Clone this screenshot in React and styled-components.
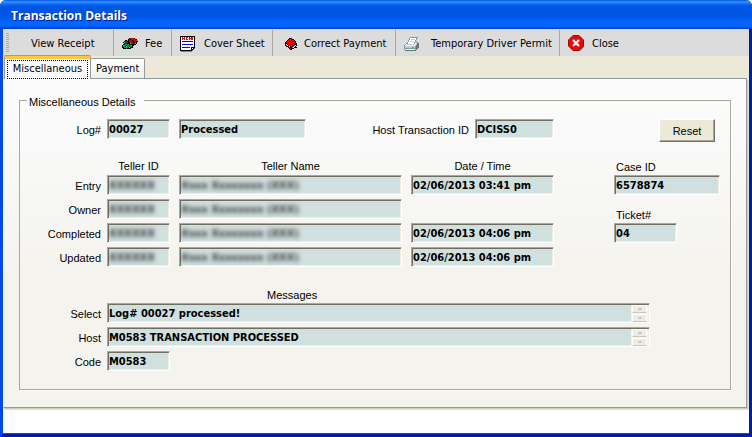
import React from "react";
import styled, { createGlobalStyle, css } from "styled-components";

const UI_FONT = '"DejaVu Sans Condensed", "DejaVu Sans", sans-serif';
const LABEL_FONT = '"Liberation Sans", Arial, sans-serif';

const GlobalStyle = createGlobalStyle`
  *, *::before, *::after { box-sizing: border-box; }
  body { margin: 0; background: #fff; }
  button, input, textarea { font: inherit; color: inherit; margin: 0; }
`;

const Window = styled.main`
  display: flex;
  flex-direction: column;
  min-height: 100vh;
  border: solid #0831d9;
  border-width: 0 3px 3px;
  border-color: #0831d9 #001ea0 #001ea0 #0048f0;
  border-radius: 6px 6px 0 0;
  background: #fff;
  color: #000;
  font: 11px/14px ${LABEL_FONT};
  box-shadow: inset 0 -1px #0050ee;
`;

const TitleBar = styled.header`
  display: flex;
  align-items: center;
  height: 29px;
  margin: 0 -3px;
  padding: 3px 11px 0;
  border-radius: 6px 6px 0 0;
  background: linear-gradient(
    #0058e6 0, #3a93ff 2px, #0a6af4 4px, #0055e5 7px, #0053e1 15px,
    #0066ff 22px, #0066ff 26px, #0144d0 28px, #003dd7 29px
  );
`;

const Title = styled.h1`
  margin: 0;
  color: #fff;
  font: bold 12px/20px "Open Sans", sans-serif;
  text-shadow: 1px 1px #0a1883;
`;

const Toolbar = styled.nav`
  display: flex;
  height: 27px;
  background: #dcdcdc;
  font-family: ${UI_FONT};
`;

const Grip = styled.span`
  width: 3px;
  margin: 4px 0 4px 3px;
  background: repeating-linear-gradient(#aaa 0 1px, #dcdcdc 1px 2px);
`;

const ToolButton = styled.button`
  display: flex;
  align-items: center;
  gap: ${({ $gap }) => $gap || 7}px;
  width: ${({ $width }) => $width}px;
  margin-top: 1px;
  padding: 1px 0 0 ${({ $inset }) => $inset || 8}px;
  border: 0;
  border-right: ${({ $last }) => ($last ? "0" : "1px solid #aca899")};
  background: none;
  white-space: nowrap;
`;

const TabStrip = styled.div`
  display: flex;
  align-items: flex-end;
  height: 22px;
  padding-left: 1px;
  background: #ece9d8;
  font-family: ${UI_FONT};
`;

const Tab = styled.button`
  padding: 1px 5px 0;
  border: 1px solid #919b9c;
  border-bottom: 0;
  border-radius: 2px 2px 0 0;
  ${({ $active }) =>
    $active
      ? css`
          height: 23px;
          width: 87px;
          margin-bottom: -1px;
          padding: 0 2px;
          border-top: 3px solid #ffc73c;
          box-shadow: 0 -1px #e68b2c;
          background: #fcfcfe;
          z-index: 1;
        `
      : css`
          height: 20px;
          width: 54px;
          border-left: 0;
          background: linear-gradient(#fff, #f0f0ea);
        `}
`;

const FocusRing = styled.span`
  display: block;
  height: 19px;
  line-height: 16px;
  border: 1px dotted #000;
`;

const Page = styled.section`
  padding: 12px 9px 17px 15px;
  margin-right: 2px;
  border: 1px solid #919b9c;
  border-left-color: #fff;
  box-shadow: 1px 1px #d0cebf, 2px 2px #e3e0d0;
  background: linear-gradient(#fcfcfe, #f4f3ee 60%);
`;

const Group = styled.fieldset`
  min-width: 0;
  margin: 0 6px 0 0;
  padding: 10px 10px 18px 0;
  border: 1px solid #aca899;
  box-shadow: 1px 1px #fff;
`;

const Legend = styled.legend`
  margin-left: 7px;
  padding: 4px 9px 0 2px;
  line-height: 14px;
`;

const Columns = styled.div`
  display: flex;
`;

const Main = styled.div`
  flex: none;
`;

const Side = styled.div`
  flex: 1;
  display: flex;
  flex-direction: column;
  align-items: flex-start;
  padding-left: 60px;
`;

const Line = styled.div`
  display: grid;
  grid-template-columns: 78px 63px 127px 151px 79px;
  column-gap: 9px;
  align-items: center;
  margin-bottom: 22px;
`;

const Entries = styled.div`
  display: grid;
  grid-template-columns: 78px 63px 223px 143px;
  gap: 4px 9px;
  align-items: center;
`;

const Messages = styled.div`
  display: grid;
  grid-template-columns: 78px 543px;
  gap: 4px 9px;
  align-items: center;
  margin-top: 24px;
`;

const Heading = styled.span`
  grid-column: ${({ $column }) => $column || "auto"};
  line-height: 10px;
  text-align: center;
`;

const MessagesHeading = styled.span`
  grid-column: 2;
  padding-left: 160px;
  line-height: 8px;
`;

const RowLabel = styled.label`
  margin-right: -3px;
  padding-top: 2px;
  text-align: right;
`;

const SideLabel = styled.label`
  margin: ${({ $gap }) => $gap}px 0 1px 2px;
`;

const Frame = styled.span`
  display: flex;
  height: 20px;
  width: ${({ $width }) => ($width ? `${$width}px` : "auto")};
  overflow: hidden;
  border: 1px solid;
  border-color: #aca899 #fff #fff #aca899;
  background: #d0e0df;
  box-shadow: inset 1px 1px #716f64, inset -1px -1px #f1efe2;
`;

const Input = styled.input`
  flex: 1;
  min-width: 0;
  padding: 1px 1px 0;
  border: 0;
  outline: 0;
  background: none;
  font: bold 11px/16px ${UI_FONT};
  ${({ $masked }) => $masked && "filter: blur(2px); color: #333;"}
`;

const Spinner = styled.span`
  display: flex;
  flex-direction: column;
  gap: 1px;
  width: 17px;
  margin: 1px 1px 0 0;
  padding: 0 1px;
  background: #f4f3ee;
`;

const SpinButton = styled.button`
  display: flex;
  align-items: center;
  justify-content: center;
  height: 8px;
  padding: 0;
  border: 1px solid #fff;
  border-bottom-color: #c9c7ba;
  border-radius: 1px;
  background: #ecebe5;
`;

const ResetButton = styled.button`
  align-self: flex-end;
  width: 56px;
  height: 23px;
  margin-right: 5px;
  padding: 0;
  border: 1px solid;
  border-color: #fff #716f64 #716f64 #fff;
  background: #ece9d8;
  box-shadow: inset -1px -1px #aca899;
`;

const PALETTE = {
  K: "#000", R: "#f00000", D: "#9a1818", G: "#0a9a3c", N: "#065f2c", W: "#fff",
  C: "#18c8d8", B: "#0000ff", S: "#848484", L: "#c0ccd2", M: "#8899a2", E: "#eef3f6",
  V: "#18e018", P: "#66747f",
};

const Sprite = ({ rows }) => (
  <svg width={rows[0].length} height={rows.length} shapeRendering="crispEdges" aria-hidden="true">
    {rows.flatMap((row, y) =>
      [...row].map((c, x) =>
        c === "." ? null : <rect key={`${x}-${y}`} x={x} y={y} width="1" height="1" fill={PALETTE[c]} />
      )
    )}
  </svg>
);

const CARS = [
  ".......KDDDDDC..",
  "......KDKDDDDDK.",
  "...KKCKDDDKDDDRC",
  "..KDDKKDDDRKDDKK",
  ".KCDDRKKDDDKKRK.",
  "..KNNKKKCDDKDCK.",
  ".KNGGNGKKKKKKK..",
  "KCGGKGGNGCKK....",
  "KGGKCGGKGGK.....",
  "KKGGGGKCKKK.....",
  ".KKKNKKKK.......",
];

const MEMO = [
  "KKKKKKKKKKKKKKK.",
  "KWRWRWRRWRWRRWK.",
  "KWRRRWRWWRRRRWK.",
  "KWRWRWRRWRWRRWK.",
  "KWWWWWWWWWWWWWK.",
  "KWBBBBBBBBBBBWK.",
  "KWWWWWWWWWWWWWK.",
  "KWWWWWWWWWWWWWK.",
  "KWBBBBBBBBBBBWK.",
  "KWWWWWWWWWWWWWK.",
  "KWWWWWWWWWWWWWK.",
  "KWBBBBBBBBWKKKK.",
  "KWWWWWWWWWWKWKS.",
  "KWWWWWWWWWWKKS..",
  "KKKKKKKKKKKKS...",
  ".SSSSSSSSSSS....",
];

const BOOK = [
  "....KKK.....",
  "...KRRRKK...",
  "..KRRRRRRK..",
  ".KRRRRRRRRK.",
  "KRRRRRRRRRK.",
  "KKRRRRRRRRRK",
  "KWKRRRRRRKKK",
  "KDWKRRRRKSWK",
  ".KKDWKRKSWK.",
  "...KDKKSWKKK",
  "....KDKKK...",
  ".....KK.....",
];

const PRINTER = [
  "......MMMMMMMM.",
  ".....MWWWWWWM..",
  ".....MWLLLLWM..",
  "....MWWWWWWM...",
  "....MWLLLLWMM..",
  "...MWWWWWWMLLM.",
  "..MMWWWWWWMELPP",
  ".MELLLLLLLEELPP",
  "MEEEEEEEEEELPPP",
  "MLLLLLLLLLLMPPP",
  "MLLLLLLLVVLMPPP",
  "MMMMMMMMVVMMPP.",
  "MEEEEEEEEEEMP..",
  ".PPPPPPPPPPP...",
];

const CloseIcon = () => (
  <svg width="17" height="17" viewBox="0 0 17 17" aria-hidden="true">
    <path d="M6 2h6l4 4v6l-4 4H6l-4-4V6z" fill="#85807c" />
    <path d="M5 .5h6L15.500 5v6L11 15.500H5L.5 11V5z" fill="#f00808" stroke="#8c1010" />
    <path d="M5 5l6 6M11 5l-6 6" stroke="#fff" strokeWidth="2.200" />
  </svg>
);

const Arrow = ({ up }) => (
  <svg width="4" height="2" shapeRendering="crispEdges" aria-hidden="true">
    <path d={up ? "M1 0h2v1h1v1H0V1h1z" : "M0 0h4v1H3v1H1V1H0z"} fill="#c5c3b8" />
  </svg>
);

const Field = ({ value, width, label, id, masked, spin }) => (
  <Frame $width={width}>
    <Input id={id} aria-label={label} defaultValue={value} $masked={masked} readOnly />
    {spin && (
      <Spinner>
        <SpinButton aria-label="Scroll up" disabled><Arrow up /></SpinButton>
        <SpinButton aria-label="Scroll down" disabled><Arrow /></SpinButton>
      </Spinner>
    )}
  </Frame>
);

const ENTRIES = [
  { name: "Entry", time: "02/06/2013 03:41 pm" },
  { name: "Owner" },
  { name: "Completed", time: "02/06/2013 04:06 pm" },
  { name: "Updated", time: "02/06/2013 04:06 pm" },
];

export default function App() {
  return (
    <Window>
      <GlobalStyle />
      <TitleBar><Title>Transaction Details</Title></TitleBar>
      <Toolbar>
        <Grip />
        <ToolButton $width={105} $inset={22}>View Receipt</ToolButton>
        <ToolButton $width={58}><Sprite rows={CARS} />Fee</ToolButton>
        <ToolButton $width={101} $gap={8}><Sprite rows={MEMO} />Cover Sheet</ToolButton>
        <ToolButton $width={123} $inset={12}><Sprite rows={BOOK} />Correct Payment</ToolButton>
        <ToolButton $width={164} $gap={12}><Sprite rows={PRINTER} />Temporary Driver Permit</ToolButton>
        <ToolButton $width={80} $last><CloseIcon />Close</ToolButton>
      </Toolbar>
      <TabStrip role="tablist">
        <Tab role="tab" aria-selected="true" $active><FocusRing>Miscellaneous</FocusRing></Tab>
        <Tab role="tab" aria-selected="false">Payment</Tab>
      </TabStrip>
      <Page role="tabpanel">
        <Group>
          <Legend>Miscellaneous Details</Legend>
          <Columns>
            <Main>
              <Line>
                <RowLabel htmlFor="log">Log#</RowLabel>
                <Field id="log" value="00027" />
                <Field label="Status" value="Processed" />
                <RowLabel htmlFor="host-id">Host Transaction ID</RowLabel>
                <Field id="host-id" value="DCISS0" />
              </Line>
              <Entries>
                <Heading $column={2}>Teller ID</Heading>
                <Heading>Teller Name</Heading>
                <Heading>Date / Time</Heading>
                {ENTRIES.map(({ name, time }) => (
                  <React.Fragment key={name}>
                    <RowLabel htmlFor={name}>{name}</RowLabel>
                    <Field id={name} value="XXXXXX" masked />
                    <Field label={`${name} teller name`} value="Xxxx Xxxxxxxx (XXX)" masked />
                    {time ? <Field label={`${name} date and time`} value={time} /> : <span />}
                  </React.Fragment>
                ))}
              </Entries>
            </Main>
            <Side>
              <ResetButton>Reset</ResetButton>
              <SideLabel htmlFor="case" $gap={18}>Case ID</SideLabel>
              <Field id="case" value="6578874" width={106} />
              <SideLabel htmlFor="ticket" $gap={13}>Ticket#</SideLabel>
              <Field id="ticket" value="04" width={63} />
            </Side>
          </Columns>
          <Messages>
            <MessagesHeading>Messages</MessagesHeading>
            <RowLabel htmlFor="select">Select</RowLabel>
            <Field id="select" value="Log# 00027 processed!" spin />
            <RowLabel htmlFor="host">Host</RowLabel>
            <Field id="host" value="M0583 TRANSACTION PROCESSED" spin />
            <RowLabel htmlFor="code">Code</RowLabel>
            <Field id="code" value="M0583" width={63} />
          </Messages>
        </Group>
      </Page>
    </Window>
  );
}
